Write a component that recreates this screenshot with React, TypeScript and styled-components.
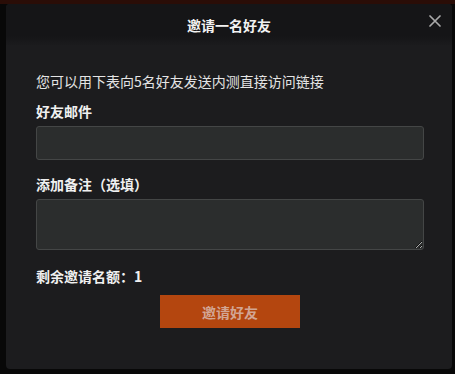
import React from "react";
import styled, { createGlobalStyle } from "styled-components";

const Global = createGlobalStyle`
  html, body { margin: 0; padding: 0; }
  body {
    background: #070707;
    font-family: "Noto Sans CJK SC", "Noto Sans", sans-serif;
  }
`;

const Page = styled.div`
  width: 455px;
  height: 374px;
  box-sizing: border-box;
  padding: 4px 3px 5px 6px;
  background: linear-gradient(to bottom, #2a0d07 0, #2a0d07 4px, #080808 4px);
  display: flex;
`;

const Modal = styled.div`
  position: relative;
  flex: 1;
  display: flex;
  flex-direction: column;
  background: #1c1c1e;
  border-radius: 4px;
  overflow: hidden;
`;

const Header = styled.div`
  height: 41px;
  display: flex;
  align-items: center;
  justify-content: center;
  background: linear-gradient(to bottom, #151517 0, #151517 32px, #1b1b1d 41px);
`;

const Title = styled.h2`
  margin: 0;
  font-size: 14px;
  font-weight: 700;
  color: #f2f2f2;
  line-height: 20px;
`;

const Close = styled.button`
  position: absolute;
  top: 10px;
  right: 10px;
  width: 14px;
  height: 14px;
  padding: 0;
  border: 0;
  background: transparent;
  display: flex;
  align-items: center;
  justify-content: center;
  cursor: pointer;
`;

const Body = styled.div`
  display: flex;
  flex-direction: column;
  padding: 26px 28px 41px 30px;
`;

const Text = styled.p<{ $bold?: boolean; $mt?: number }>`
  margin: ${(p) => p.$mt ?? 0}px 0 0;
  font-size: 14px;
  line-height: 20px;
  font-weight: ${(p) => (p.$bold ? 700 : 400)};
  color: ${(p) => (p.$bold ? "#f0f0f0" : "#e4e4e4")};
`;

const Input = styled.input`
  margin-top: 5px;
  height: 34px;
  box-sizing: border-box;
  background: #2b2d2d;
  border: 1px solid #444646;
  border-radius: 3px;
  outline: none;
  color: #eee;
  padding: 0 8px;
`;

const Area = styled.textarea`
  margin-top: 5px;
  height: 51px;
  box-sizing: border-box;
  background: #2b2d2d;
  border: 1px solid #444646;
  border-radius: 3px;
  outline: none;
  color: #eee;
  padding: 6px 8px;
  resize: vertical;
  font-family: inherit;
`;

const Button = styled.button`
  margin: 9px auto 0;
  width: 140px;
  height: 33px;
  border: 0;
  background: #b4460f;
  color: #d2a594;
  font-family: inherit;
  font-size: 14px;
  font-weight: 700;
  cursor: pointer;
`;

export default function App() {
  return (
    <>
      <Global />
      <Page>
        <Modal>
          <Header>
            <Title>邀请一名好友</Title>
          </Header>
          <Close aria-label="关闭">
            <svg width="12" height="12" viewBox="0 0 12 12">
              <path d="M1 1L11 11M11 1L1 11" stroke="#a9a9a9" strokeWidth="1.7" strokeLinecap="round" />
            </svg>
          </Close>
          <Body>
            <Text>您可以用下表向5名好友发送内测直接访问链接</Text>
            <Text $bold $mt={10}>好友邮件</Text>
            <Input type="email" />
            <Text $bold $mt={14}>添加备注（选填）</Text>
            <Area />
            <Text $bold $mt={16}>剩余邀请名额：1</Text>
            <Button>邀请好友</Button>
          </Body>
        </Modal>
      </Page>
    </>
  );
}
